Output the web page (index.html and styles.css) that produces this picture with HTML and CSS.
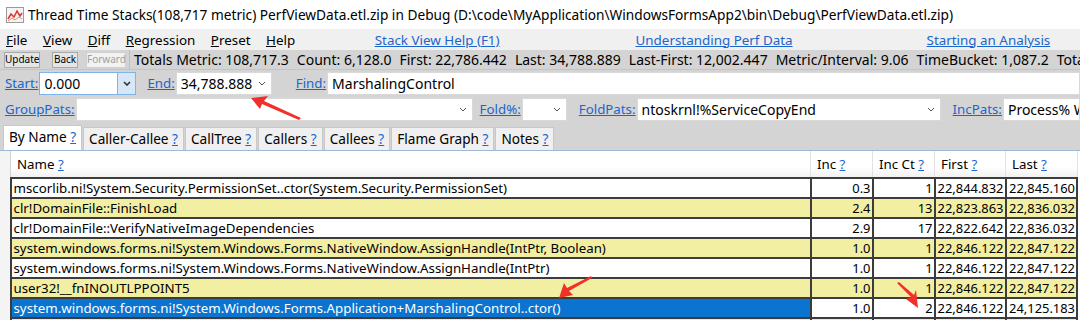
FILE: index.html
```html
<!DOCTYPE html>
<html lang="en">
<head>
    <meta charset="UTF-8">
    <title>Thread Time Stacks</title>
    <link rel="stylesheet" href="styles.css">
</head>
<body>
    <div class="titlebar">
        <svg class="app-icon" width="18" height="16" viewBox="0 0 18 16">
            <rect x="0.5" y="0.5" width="17" height="15" fill="#f4f4f4" stroke="#9a9a9a"/>
            <polyline points="2,12 5,7 8,10 11,4 14,9 16,6" fill="none" stroke="#d9362b" stroke-width="1.5"/>
            <polyline points="2,14 6,11 9,13 13,10 16,12" fill="none" stroke="#e88a80" stroke-width="1"/>
        </svg>
        <span>Thread Time Stacks(108,717 metric) PerfViewData.etl.zip in Debug (D:\code\MyApplication\WindowsFormsApp2\bin\Debug\PerfViewData.etl.zip)</span>
    </div>

    <div class="menubar">
        <span class="menu"><u>F</u>ile</span>
        <span class="menu"><u>V</u>iew</span>
        <span class="menu"><u>D</u>iff</span>
        <span class="menu"><u>R</u>egression</span>
        <span class="menu"><u>P</u>reset</span>
        <span class="menu"><u>H</u>elp</span>
        <a class="help-link link-1">Stack View Help (F1)</a>
        <a class="help-link link-2">Understanding Perf Data</a>
        <a class="help-link link-3">Starting an Analysis</a>
    </div>

    <div class="statusbar">
        <button class="small-btn btn-update">Update</button>
        <button class="small-btn btn-back">Back</button>
        <button class="small-btn btn-forward" disabled>Forward</button>
        <div class="totals">
            <span>Totals Metric: 108,717.3</span>
            <span>Count: 6,128.0</span>
            <span>First: 22,786.442</span>
            <span>Last: 34,788.889</span>
            <span>Last-First: 12,002.447</span>
            <span>Metric/Interval: 9.06</span>
            <span>TimeBucket: 1,087.2</span>
            <span>TotalProcs 1</span>
        </div>
    </div>

    <div class="filter-row">
        <a class="field-label">Start:</a>
        <div class="combo combo-start">
            <span class="combo-text">0.000</span>
            <span class="combo-btn focused"><svg width="8" height="5" viewBox="0 0 8 5"><polyline points="1,1 4,4 7,1" fill="none" stroke="#333" stroke-width="1.6"/></svg></span>
        </div>
        <a class="field-label lbl-end">End:</a>
        <div class="combo combo-end">
            <span class="combo-text">34,788.888</span>
            <span class="combo-btn"><svg width="8" height="5" viewBox="0 0 8 5"><polyline points="1,1 4,4 7,1" fill="none" stroke="#555" stroke-width="1"/></svg></span>
        </div>
        <a class="field-label lbl-find">Find:</a>
        <div class="textbox textbox-find">MarshalingControl</div>
    </div>

    <div class="filter-row row-two">
        <a class="field-label">GroupPats:</a>
        <div class="combo combo-group">
            <span class="combo-text"></span>
            <span class="combo-btn"><svg width="8" height="5" viewBox="0 0 8 5"><polyline points="1,1 4,4 7,1" fill="none" stroke="#555" stroke-width="1"/></svg></span>
        </div>
        <a class="field-label lbl-fold">Fold%:</a>
        <div class="combo combo-fold">
            <span class="combo-text"></span>
            <span class="combo-btn"><svg width="8" height="5" viewBox="0 0 8 5"><polyline points="1,1 4,4 7,1" fill="none" stroke="#555" stroke-width="1"/></svg></span>
        </div>
        <a class="field-label lbl-foldpats">FoldPats:</a>
        <div class="combo combo-foldpats">
            <span class="combo-text">ntoskrnl!%ServiceCopyEnd</span>
            <span class="combo-btn"><svg width="8" height="5" viewBox="0 0 8 5"><polyline points="1,1 4,4 7,1" fill="none" stroke="#555" stroke-width="1"/></svg></span>
        </div>
        <a class="field-label lbl-inc">IncPats:</a>
        <div class="textbox textbox-inc">Process% W</div>
    </div>

    <div class="tabs">
        <div class="tab active">By Name <a>?</a></div>
        <div class="tab">Caller-Callee <a>?</a></div>
        <div class="tab">CallTree <a>?</a></div>
        <div class="tab">Callers <a>?</a></div>
        <div class="tab">Callees <a>?</a></div>
        <div class="tab">Flame Graph <a>?</a></div>
        <div class="tab">Notes <a>?</a></div>
    </div>

    <div class="grid-wrap">
        <table class="grid">
            <thead>
                <tr>
                    <th class="gutter"></th>
                    <th class="col-name">Name <a>?</a></th>
                    <th class="col-inc">Inc <a>?</a></th>
                    <th class="col-incct">Inc Ct <a>?</a></th>
                    <th class="col-first">First <a>?</a></th>
                    <th class="col-last">Last <a>?</a></th>
                </tr>
            </thead>
            <tbody>
                <tr>
                    <td class="gutter"></td>
                    <td class="name">mscorlib.ni!System.Security.PermissionSet..ctor(System.Security.PermissionSet)</td>
                    <td class="num">0.3</td><td class="num">1</td><td class="num">22,844.832</td><td class="num">22,845.160</td>
                </tr>
                <tr class="hl">
                    <td class="gutter"></td>
                    <td class="name">clr!DomainFile::FinishLoad</td>
                    <td class="num">2.4</td><td class="num">13</td><td class="num">22,823.863</td><td class="num">22,836.032</td>
                </tr>
                <tr>
                    <td class="gutter"></td>
                    <td class="name">clr!DomainFile::VerifyNativeImageDependencies</td>
                    <td class="num">2.9</td><td class="num">17</td><td class="num">22,822.642</td><td class="num">22,836.032</td>
                </tr>
                <tr class="hl">
                    <td class="gutter"></td>
                    <td class="name">system.windows.forms.ni!System.Windows.Forms.NativeWindow.AssignHandle(IntPtr, Boolean)</td>
                    <td class="num">1.0</td><td class="num">1</td><td class="num">22,846.122</td><td class="num">22,847.122</td>
                </tr>
                <tr>
                    <td class="gutter"></td>
                    <td class="name">system.windows.forms.ni!System.Windows.Forms.NativeWindow.AssignHandle(IntPtr)</td>
                    <td class="num">1.0</td><td class="num">1</td><td class="num">22,846.122</td><td class="num">22,847.122</td>
                </tr>
                <tr class="hl">
                    <td class="gutter"></td>
                    <td class="name">user32!__fnINOUTLPPOINT5</td>
                    <td class="num">1.0</td><td class="num">1</td><td class="num">22,846.122</td><td class="num">22,847.122</td>
                </tr>
                <tr class="selected">
                    <td class="gutter"></td>
                    <td class="name">system.windows.forms.ni!System.Windows.Forms.Application+MarshalingControl..ctor()</td>
                    <td class="num">1.0</td><td class="num">2</td><td class="num">22,846.122</td><td class="num">24,125.183</td>
                </tr>
                <tr class="hl">
                    <td class="gutter"></td>
                    <td class="name">&nbsp;</td>
                    <td class="num"></td><td class="num"></td><td class="num"></td><td class="num"></td>
                </tr>
            </tbody>
        </table>
    </div>

    <!-- annotation arrows drawn over the screenshot -->
    <svg class="arrows" width="1080" height="320" viewBox="0 0 1080 320">
        <g fill="#f0302a">
            <polygon points="251,98 268,96 264,101 301,118 299,120 262,104 260,109"/>
            <polygon points="559,298 564,283 567,288 591,276 592,278 569,291 573,295"/>
            <polygon points="918,308 906,299 911,297 897,283 899,282 914,295 916,290"/>
        </g>
    </svg>
</body>
</html>
```

FILE: styles.css
```css
body {
    margin: 0;
    width: 1080px;
    height: 320px;
    overflow: hidden;
    position: relative;
    font-family: "Noto Sans", "Noto Sans CJK SC", sans-serif;
    font-size: 14px;
    color: #000;
    background: #d4d4d4;
}

a {
    color: #1a66cc;
    text-decoration: underline;
}

/* title bar */
.titlebar {
    height: 29px;
    background: #fff;
    display: flex;
    align-items: center;
    padding-left: 6px;
    font-size: 13.7px;
    white-space: nowrap;
}

.app-icon {
    margin-right: 4px;
}

/* menu */
.menubar {
    height: 21px;
    background: #f0f0f0;
    display: flex;
    align-items: center;
    white-space: nowrap;
    font-size: 13.4px;
}

.menu {
    margin-right: 15.5px;
}

.menu:first-child {
    margin-left: 6px;
}

.help-link.link-1 { margin-left: 64px; }
.help-link.link-2 { margin-left: 136px; }
.help-link.link-3 { margin-left: 134px; }

/* status line */
.statusbar {
    height: 19px;
    display: flex;
    align-items: center;
    white-space: nowrap;
    overflow: hidden;
    border-bottom: 1px solid #c4c4c4;
}

.small-btn {
    font-family: "Noto Sans", sans-serif;
    font-size: 10px;
    height: 16px;
    padding: 0;
    line-height: 13px;
    background: #e6e6e6;
    border: 1px solid #a8a8a8;
    color: #000;
    flex-shrink: 0;
}

.btn-update { margin-left: 4px; width: 36px; }
.btn-back { margin-left: 12px; width: 26px; }
.btn-forward {
    margin-left: 8px;
    width: 40px;
    color: #a0a0a0;
    background: #f2f2f2;
    border-color: #d0d0d0;
}

.totals {
    margin-left: 3px;
    padding-left: 4px;
    border-left: 1px solid #bdbdbd;
    display: flex;
    gap: 8px;
}

/* filters */
.filter-row {
    height: 26px;
    display: flex;
    align-items: center;
    white-space: nowrap;
    font-size: 13.3px;
}

.field-label {
    margin-left: 5px;
    margin-right: 1px;
}

.combo, .textbox {
    height: 23px;
    background: #fff;
    display: flex;
    align-items: center;
    box-sizing: border-box;
    border: 1px solid #d9d9d9;
    font-size: 14px;
    flex-shrink: 0;
}

.combo-text {
    flex: 1;
    padding-left: 4px;
    overflow: hidden;
}

.combo-btn {
    width: 17px;
    height: 100%;
    display: flex;
    align-items: center;
    justify-content: center;
}

.combo-btn.focused {
    background: #d6e8f7;
    border-left: 1px solid #7eb4ea;
}

.combo-start {
    width: 97px;
    border-color: #7eb4ea;
}

.lbl-end { margin-left: 11px; }
.combo-end { width: 96px; }

.lbl-find { margin-left: 24px; }
.textbox-find {
    flex: 1;
    padding-left: 4px;
}

.combo-group { width: 397px; }
.lbl-fold { margin-left: 7px; }
.combo-fold { width: 45px; }
.lbl-foldpats { margin-left: 12px; }
.combo-foldpats { width: 304px; }
.lbl-inc { margin-left: 12px; }
.textbox-inc {
    flex: 1;
    padding-left: 4px;
    overflow: hidden;
    flex-shrink: 1;
}

/* tabs */
.tabs {
    height: 28px;
    display: flex;
    align-items: flex-end;
    padding-left: 3px;
    gap: 1px;
    white-space: nowrap;
    font-size: 13.6px;
}

.tab {
    height: 22px;
    line-height: 22px;
    padding: 0 5px;
    background: #f0f0f0;
    border: 1px solid #c8c8c8;
    border-bottom: none;
}

.tab.active {
    background: #fff;
    height: 24px;
    padding: 0 5px;
}

/* grid */
.grid-wrap {
    background: #fff;
    border-top: 1px solid #9fb8d4;
}

.grid {
    border-collapse: collapse;
    table-layout: fixed;
    width: 1078px;
    font-size: 13.3px;
}

.grid th {
    height: 26px;
    font-weight: normal;
    text-align: left;
    padding: 0 6px;
    background: linear-gradient(#fff, #fff 60%, #f1f1f1);
    border-right: 1px solid #e2e2e2;
    border-bottom: 1px solid #e2e2e2;
    white-space: nowrap;
    overflow: hidden;
}

.grid .gutter {
    width: 10px;
    padding: 0;
    background: #f4f4f4;
    border-right: 1px solid #d4d4d4;
    border-bottom: none;
}

.col-name { width: 787px; }
.col-inc { width: 49px; }
.col-incct { width: 49px; }
.col-first { width: 58px; }

.grid td {
    height: 18px;
    padding: 0 1px 0 2px;
    border-top: 2px solid #3c3c3c;
    border-left: 2px solid #3c3c3c;
    white-space: nowrap;
    overflow: hidden;
    line-height: 18px;
}

.grid td:last-child {
    border-right: 2px solid #3c3c3c;
}

.grid td.gutter {
    border-top: none;
    border-left: none;
}

.grid td.num {
    text-align: right;
    font-size: 12.9px;
    padding-left: 0;
}

.grid tr.hl td {
    background: #f3efa2;
}

.grid tr.hl td.gutter,
.grid tr.selected td.gutter {
    background: #f4f4f4;
}

.grid tr.selected td.name {
    background: #0a74d0;
    color: #fff;
}

.arrows {
    position: absolute;
    left: 0;
    top: 0;
    pointer-events: none;
}
```
